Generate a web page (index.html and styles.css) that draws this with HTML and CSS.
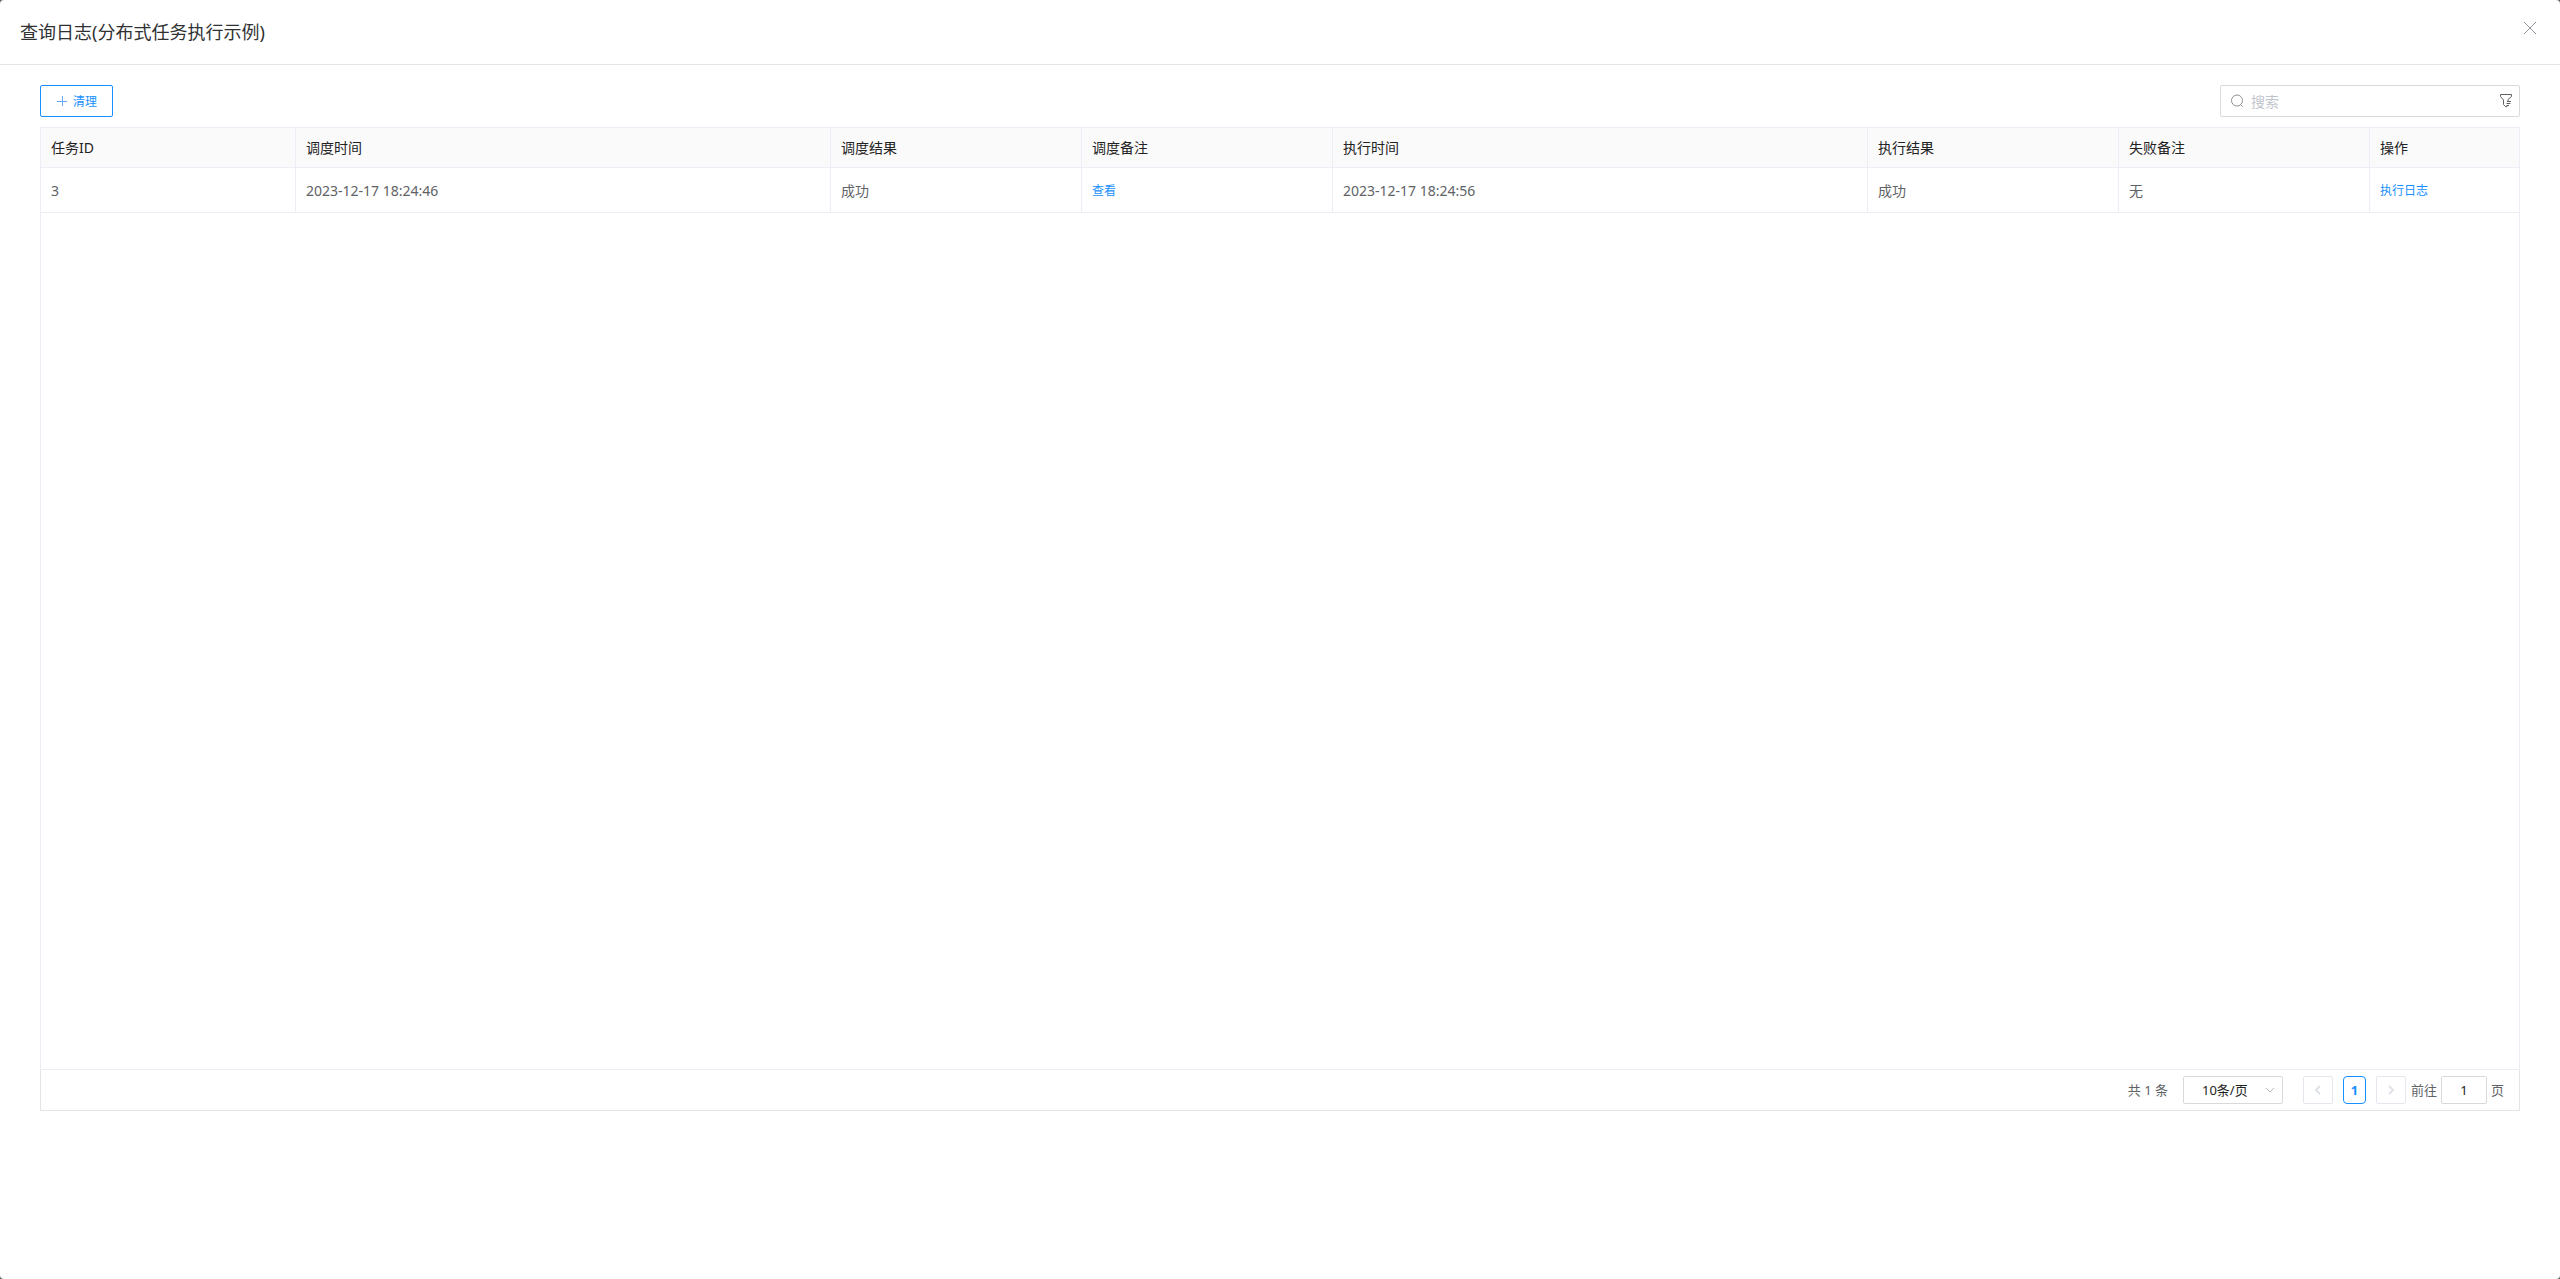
FILE: index.html
```html
<!DOCTYPE html>
<html lang="zh-CN">
<head>
    <meta charset="UTF-8">
    <meta name="viewport" content="width=device-width, initial-scale=1.0">
    <title>查询日志</title>
    <link rel="stylesheet" href="styles.css">
</head>
<body>
    <div class="dialog">
        <header class="dialog-header">
            <h1>查询日志(分布式任务执行示例)</h1>
            <button type="button" class="close-btn" aria-label="关闭">
                <svg width="14" height="16" viewBox="0 0 14 16"><path d="M1 2L13 14M13 2L1 14"/></svg>
            </button>
        </header>

        <main class="dialog-body">
            <!-- Toolbar -->
            <div class="toolbar">
                <button type="button" class="clean-btn">
                    <svg width="12" height="12" viewBox="0 0 12 12"><path d="M1 6.5H11M6.5 1V11"/></svg>
                    清理
                </button>
                <div class="search-box">
                    <svg class="search-icon" width="14" height="14" viewBox="0 0 14 14"><circle cx="7" cy="6.5" r="5.5"/><path d="M10.5 10.5L12.7 12.7"/></svg>
                    <input type="text" id="search" placeholder="搜索" aria-label="搜索">
                    <button type="button" class="filter-btn" aria-label="筛选">
                        <svg width="14" height="16" viewBox="0 0 14 16"><path d="M12.5 1.5H1.5V3.5L4.5 7V11.5L7 14L8.5 13M12.5 1.5V3.5L9 6.5V8M8 8.5H12M7.5 10.5H11.5M7.5 12.5H10"/></svg>
                    </button>
                </div>
            </div>

            <!-- Log table -->
            <div class="table-wrap">
                <table class="log-table">
                    <colgroup>
                        <col class="col-id">
                        <col>
                        <col class="col-normal">
                        <col class="col-normal">
                        <col>
                        <col class="col-normal">
                        <col class="col-normal">
                        <col class="col-action">
                    </colgroup>
                    <thead>
                        <tr>
                            <th>任务ID</th>
                            <th>调度时间</th>
                            <th>调度结果</th>
                            <th>调度备注</th>
                            <th>执行时间</th>
                            <th>执行结果</th>
                            <th>失败备注</th>
                            <th>操作</th>
                        </tr>
                    </thead>
                    <tbody>
                        <tr>
                            <td>3</td>
                            <td>2023-12-17 18:24:46</td>
                            <td>成功</td>
                            <td><a href="#">查看</a></td>
                            <td>2023-12-17 18:24:56</td>
                            <td>成功</td>
                            <td>无</td>
                            <td><a href="#">执行日志</a></td>
                        </tr>
                    </tbody>
                </table>
            </div>

            <!-- Pagination -->
            <div class="pagination">
                <span class="total">共 1 条</span>
                <div class="page-size">
                    <select id="pageSize" aria-label="每页条数">
                        <option>10条/页</option>
                        <option>20条/页</option>
                        <option>50条/页</option>
                    </select>
                    <svg width="10" height="6" viewBox="0 0 10 6"><path d="M1 1L5 5L9 1"/></svg>
                </div>
                <div class="pager">
                    <button type="button" class="page-btn" aria-label="上一页" disabled>
                        <svg width="8" height="10" viewBox="0 0 8 10"><path d="M6 1L2 5L6 9"/></svg>
                    </button>
                    <button type="button" class="page-number">1</button>
                    <button type="button" class="page-btn" aria-label="下一页" disabled>
                        <svg width="8" height="10" viewBox="0 0 8 10"><path d="M2 1L6 5L2 9"/></svg>
                    </button>
                </div>
                <div class="jump">
                    <label for="page">前往</label>
                    <input type="text" id="page" value="1">
                    <span>页</span>
                </div>
            </div>
        </main>
    </div>
</body>
</html>
```
FILE: styles.css
```css
* { box-sizing: border-box; margin: 0; padding: 0; }

body {
    background: #5f5f5f;
    color: #606266;
    font-family: "Noto Sans", "Noto Sans CJK SC", sans-serif;
    font-size: 14px;
}

button, input, select { font-family: inherit; outline: none; }
button { cursor: pointer; background: none; border: none; }
svg { display: block; fill: none; stroke: currentColor; flex: none; }
a { color: #1890ff; font-size: 12px; text-decoration: none; }

/* Dialog */
.dialog {
    min-height: 100vh;
    display: flex;
    flex-direction: column;
    background: #fff;
    border-radius: 4px;
}

.dialog-header {
    display: flex;
    justify-content: space-between;
    height: 65px;
    padding: 20px 23px 20px 20px;
    border-bottom: 1px solid #e4e4e4;
}

.dialog-header h1 {
    color: #303133;
    font-size: 18px;
    font-weight: 400;
    line-height: 24px;
}

.close-btn { height: 16px; color: #909399; }

.dialog-body {
    flex: 1;
    display: flex;
    flex-direction: column;
    padding: 20px 40px 168px;
}

/* Toolbar */
.toolbar {
    display: flex;
    justify-content: space-between;
    margin-bottom: 10px;
}

.clean-btn {
    display: flex;
    align-items: center;
    gap: 5px;
    height: 32px;
    padding: 0 15px;
    border: 1px solid #1890ff;
    border-radius: 2px;
    color: #1890ff;
    font-size: 12px;
}

.clean-btn svg { color: #69a8ff; }

.search-box {
    display: flex;
    align-items: center;
    gap: 7px;
    width: 300px;
    height: 32px;
    padding: 0 6px 0 9px;
    border: 1px solid #d9d9d9;
    border-radius: 2px;
}

.search-box input {
    flex: 1;
    min-width: 0;
    border: none;
    color: #606266;
    font-size: 14px;
}

.search-box input::placeholder { color: #c0c4cc; }
.search-icon { color: #909090; }
.filter-btn { color: #606060; }

/* Table */
.table-wrap {
    flex: 1;
    border: 1px solid #ebeef5;
}

.log-table {
    width: 100%;
    table-layout: fixed;
    border-collapse: separate;
    border-spacing: 0;
}

.col-id { width: 255px; }
.col-normal { width: 251px; }
.col-action { width: 149px; }

.log-table th, .log-table td {
    padding: 0 10px;
    border-right: 1px solid #ebeef5;
    border-bottom: 1px solid #ebeef5;
    text-align: left;
    font-weight: 400;
    line-height: 20px;
}

.log-table th:last-child, .log-table td:last-child { border-right: none; }

.log-table th {
    height: 40px;
    background: #fafafa;
    color: #222;
}

.log-table td { height: 45px; padding-top: 1px; }

/* Pagination */
.pagination {
    display: flex;
    justify-content: flex-end;
    align-items: center;
    height: 41px;
    padding: 0 15px;
    border: 1px solid #e4e4e4;
    border-top: none;
    font-size: 13px;
    line-height: 16px;
}

.page-size { position: relative; margin: 0 20px 0 15px; }

.page-size select {
    appearance: none;
    display: block;
    width: 100px;
    height: 28px;
    padding: 0 25px 0 18px;
    background: #fff;
    border: 1px solid #d9d9d9;
    border-radius: 2px;
    color: #222;
    font-size: 13px;
}

.page-size svg {
    position: absolute;
    top: 11px;
    right: 8px;
    color: #b4b8c0;
    pointer-events: none;
}

.pager { display: flex; gap: 10px; }

.page-btn, .page-number {
    display: flex;
    align-items: center;
    justify-content: center;
    height: 28px;
    border: 1px solid #e4e7ed;
    border-radius: 2px;
}

.page-btn { width: 30px; color: #dfe2e9; cursor: not-allowed; }
.page-btn svg { stroke-width: 2; }

.page-number {
    width: 23px;
    border-color: #1890ff;
    border-radius: 4px;
    color: #1890ff;
    font-size: 13px;
    font-weight: 700;
}

.jump {
    display: flex;
    align-items: center;
    gap: 4px;
    margin-left: 5px;
}

.jump input {
    width: 46px;
    height: 28px;
    border: 1px solid #d9d9d9;
    border-radius: 2px;
    color: #222;
    font-size: 13px;
    text-align: center;
}
```
